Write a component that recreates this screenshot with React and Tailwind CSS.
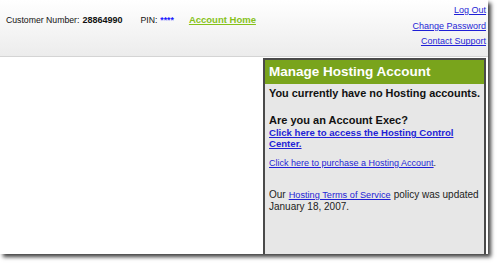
export default function App() {
    return (
        <div className="h-[263px] w-[498px] bg-white font-['Liberation_Sans',Arial,sans-serif]">
            <div className="flex h-[254px] w-[488px] flex-col overflow-hidden bg-white shadow-[3px_3px_4px_rgba(0,0,0,0.75)]">
                <Header />

                <div className="flex flex-1 justify-end pr-[2px] pt-[1px]">
                    <HostingPanel />
                </div>
            </div>
        </div>
    );
}

function Header() {
    return (
        <div className="flex h-[57px] shrink-0 justify-between border-b border-[#d4d4d4] bg-gradient-to-b from-white to-[#ececec]">
            <div className="flex items-baseline pl-[6px] pt-[13px] text-[8.7px] text-[#111]">
                <span>Customer Number:</span>
                <span className="ml-[3px] text-[9px] font-bold">28864990</span>
                <span className="ml-[18px]">PIN:</span>
                <span className="ml-[3px] font-bold text-[#1a1aff]">****</span>
                <span className="ml-[15px] text-[9.5px] font-bold text-[#86c21a] underline">
                    Account Home
                </span>
            </div>

            <div className="flex flex-col items-end pr-[2px] pt-[3px] text-[9px] leading-[15.7px] text-[#1f1fd6]">
                <a className="underline">Log Out</a>
                <a className="underline">Change Password</a>
                <a className="underline">Contact Support</a>
            </div>
        </div>
    );
}

function HostingPanel() {
    return (
        <div className="flex w-[223px] flex-col border-x-2 border-t-2 border-[#4a4a4a] bg-[#e7e7e7]">
            <div className="h-[24px] bg-[#79a41c] pl-[4px] pt-[4px] text-[13.5px] font-bold leading-[16px] text-white">
                Manage Hosting Account
            </div>

            <div className="px-[4px] pt-[3px] text-[#111]">
                <p className="text-[10.9px] font-bold leading-[13px]">
                    You currently have no Hosting accounts.
                </p>

                <p className="mt-[14px] text-[11px] font-bold leading-[13px]">
                    Are you an Account Exec?
                </p>

                <a className="block text-[9.6px] font-bold leading-[11px] text-[#1f1fd6] underline">
                    Click here to access the Hosting Control Center.
                </a>

                <p className="mt-[8px] text-[9px] leading-[12px]">
                    <a className="text-[#1f1fd6] underline">
                        Click here to purchase a Hosting Account
                    </a>
                    .
                </p>

                <div className="mt-[20px] text-[10px] leading-[12px] text-[#222]">
                    <p className="flex items-baseline gap-[3px]">
                        <span>Our</span>
                        <a className="text-[9.2px] text-[#1f1fd6] underline">
                            Hosting Terms of Service
                        </a>
                        <span>policy was updated</span>
                    </p>
                    <p>January 18, 2007.</p>
                </div>
            </div>
        </div>
    );
}
